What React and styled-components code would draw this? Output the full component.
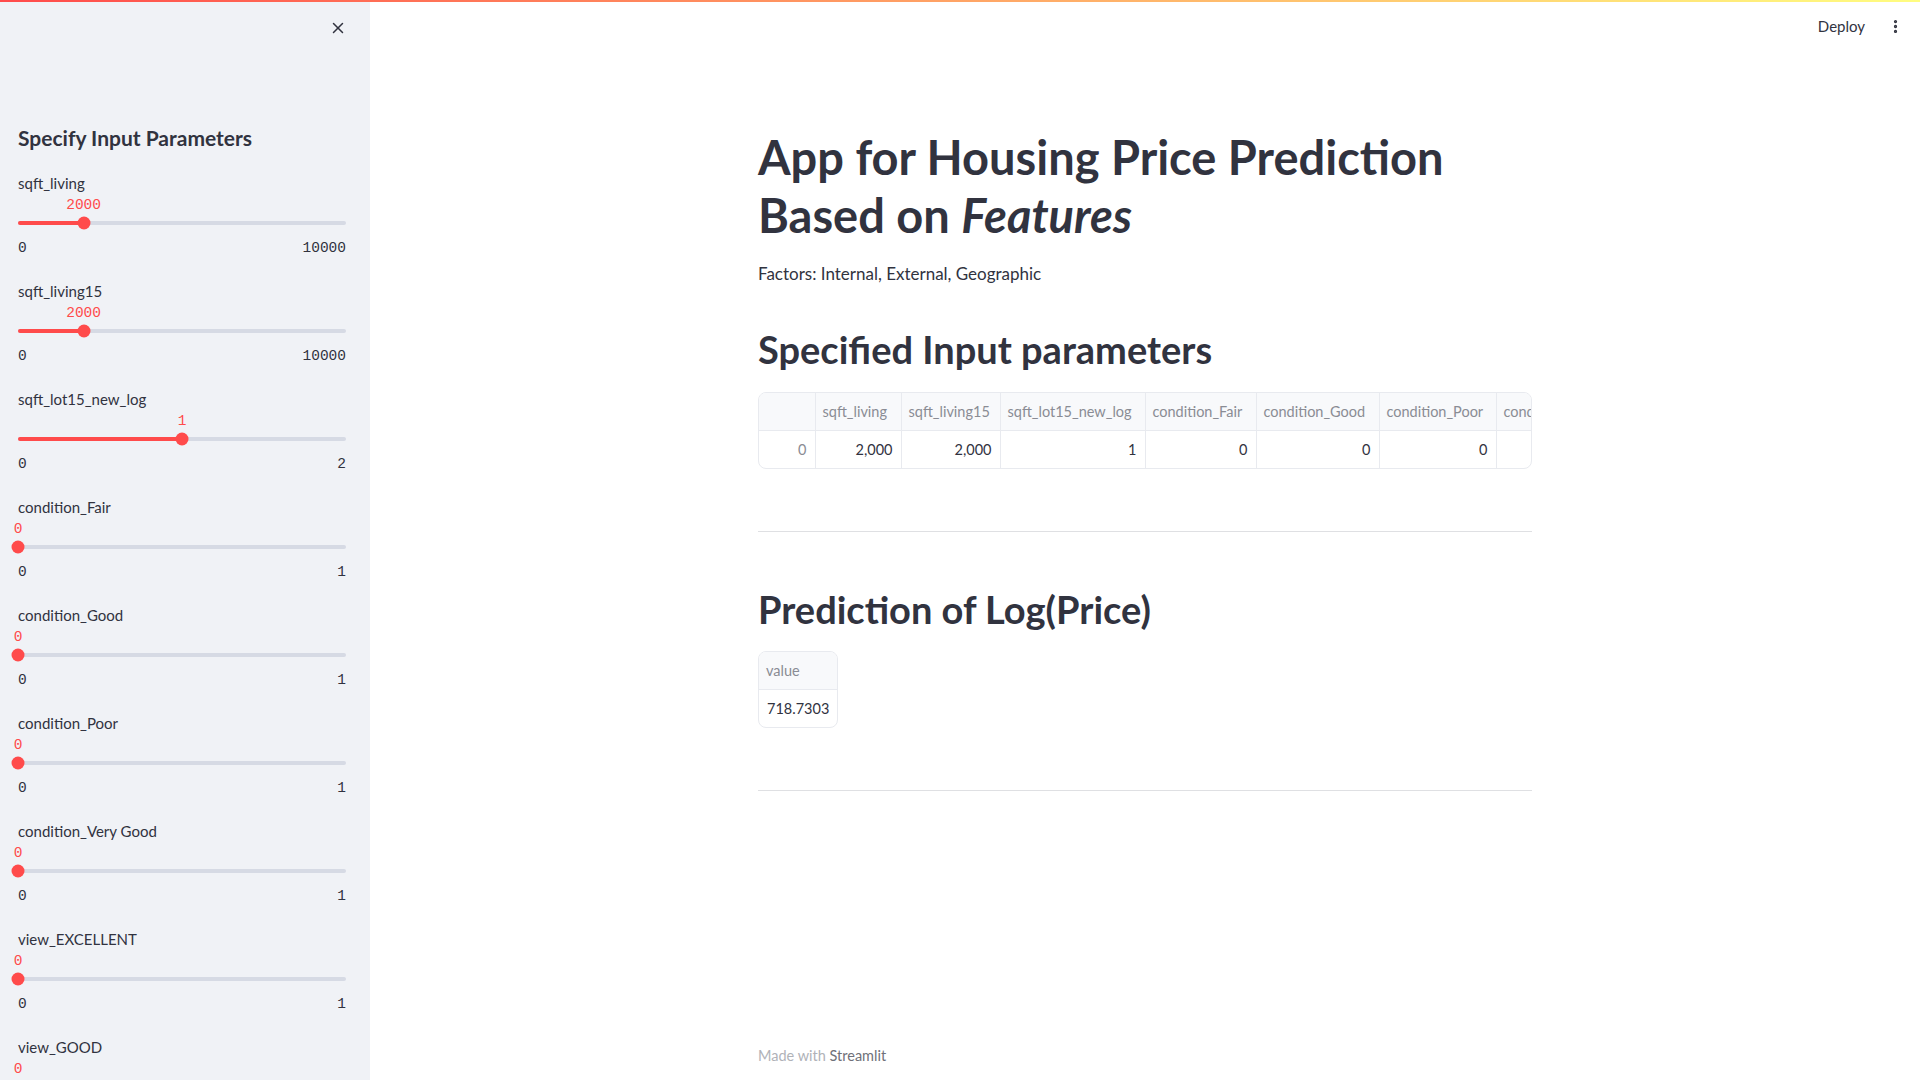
import React from 'react';
import styled, { createGlobalStyle } from 'styled-components';
import { X, EllipsisVertical } from 'lucide-react';

const GlobalStyle = createGlobalStyle`
  html, body {
    margin: 0;
    padding: 0;
    height: 100%;
    overflow: hidden;
  }
  body {
    font-family: Lato, "Noto Sans", sans-serif;
    color: #31333f;
    background: #ffffff;
  }
  * {
    box-sizing: border-box;
  }
`;

const sliders = [
  { label: 'sqft_living', value: 2000, min: 0, max: 10000 },
  { label: 'sqft_living15', value: 2000, min: 0, max: 10000 },
  { label: 'sqft_lot15_new_log', value: 1, min: 0, max: 2 },
  { label: 'condition_Fair', value: 0, min: 0, max: 1 },
  { label: 'condition_Good', value: 0, min: 0, max: 1 },
  { label: 'condition_Poor', value: 0, min: 0, max: 1 },
  { label: 'condition_Very Good', value: 0, min: 0, max: 1 },
  { label: 'view_EXCELLENT', value: 0, min: 0, max: 1 },
  { label: 'view_GOOD', value: 0, min: 0, max: 1 },
];

const columns = [
  { name: 'sqft_living', width: 86, value: '2,000' },
  { name: 'sqft_living15', width: 99, value: '2,000' },
  { name: 'sqft_lot15_new_log', width: 145, value: '1' },
  { name: 'condition_Fair', width: 111, value: '0' },
  { name: 'condition_Good', width: 123, value: '0' },
  { name: 'condition_Poor', width: 117, value: '0' },
  { name: 'condition_Very Good', width: 140, value: '0' },
];

const Slider = ({ label, value, min, max }) => {
  const pct = ((value - min) / (max - min)) * 100;
  return (
    <SliderBlock>
      <SliderLabel>{label}</SliderLabel>
      <ValueRow>
        <ThumbValue style={{ left: `${pct}%` }}>{value}</ThumbValue>
      </ValueRow>
      <TrackWrap>
        <Track>
          <Fill style={{ width: `${pct}%` }} />
        </Track>
        <Thumb style={{ left: `${pct}%` }} />
      </TrackWrap>
      <Ticks>
        <span>{min}</span>
        <span>{max}</span>
      </Ticks>
    </SliderBlock>
  );
};

const App = () => {
  return (
    <>
      <GlobalStyle />
      <Page>
        <Decoration />
        <Body>
          <Sidebar>
            <CloseRow>
              <X size={18} strokeWidth={2} color="#31333f" />
            </CloseRow>
            <SideHeader>Specify Input Parameters</SideHeader>
            <SliderList>
              {sliders.map(s => (
                <Slider key={s.label} {...s} />
              ))}
            </SliderList>
          </Sidebar>
          <Main>
            <TopBar>
              <DeployButton>Deploy</DeployButton>
              <EllipsisVertical size={17} strokeWidth={2.6} color="#31333f" />
            </TopBar>
            <Content>
              <Title>
                App for Housing Price Prediction
                <br />
                Based on <em>Features</em>
              </Title>
              <Paragraph>Factors: Internal, External, Geographic</Paragraph>
              <SubTitle $top={37}>Specified Input parameters</SubTitle>
              <TableFrame $top={19}>
                <Table>
                  <thead>
                    <tr>
                      <HeadCell $width={56} />
                      {columns.map(c => (
                        <HeadCell key={c.name} $width={c.width}>
                          {c.name}
                        </HeadCell>
                      ))}
                    </tr>
                  </thead>
                  <tbody>
                    <tr>
                      <IndexCell>0</IndexCell>
                      {columns.map(c => (
                        <DataCell key={c.name}>{c.value}</DataCell>
                      ))}
                    </tr>
                  </tbody>
                </Table>
              </TableFrame>
              <Divider />
              <SubTitle $top={53}>Prediction of Log(Price)</SubTitle>
              <TableFrame $top={18} $fit>
                <Table>
                  <thead>
                    <tr>
                      <HeadCell $width={78}>value</HeadCell>
                    </tr>
                  </thead>
                  <tbody>
                    <tr>
                      <DataCell $left>718.7303</DataCell>
                    </tr>
                  </tbody>
                </Table>
              </TableFrame>
              <Divider />
              <Footer>
                Made with <FooterLink>Streamlit</FooterLink>
              </Footer>
            </Content>
          </Main>
        </Body>
      </Page>
    </>
  );
};

export default App;

const Page = styled.div`
  display: flex;
  flex-direction: column;
  height: 100vh;
`;

const Decoration = styled.div`
  height: 2px;
  flex-shrink: 0;
  background: linear-gradient(90deg, #ff4b4b, #fffd80);
`;

const Body = styled.div`
  display: flex;
  flex: 1;
  min-height: 0;
`;

const Sidebar = styled.aside`
  width: 370px;
  flex-shrink: 0;
  background: #f0f2f6;
  padding: 0 24px 0 18px;
  overflow: hidden;
`;

const CloseRow = styled.div`
  height: 52px;
  display: flex;
  align-items: center;
  justify-content: flex-end;
  margin-right: -1px;
`;

const SideHeader = styled.h2`
  margin: 69px 0 0;
  font-size: 21px;
  font-weight: 700;
  line-height: 30px;
  color: #31333f;
`;

const SliderList = styled.div`
  display: flex;
  flex-direction: column;
  gap: 18px;
  margin-top: 19px;
`;

const SliderBlock = styled.div`
  display: grid;
  grid-template-rows: 22px 20px 18px 30px;
`;

const SliderLabel = styled.div`
  font-size: 15px;
  line-height: 22px;
  color: #31333f;
`;

const ValueRow = styled.div`
  position: relative;
`;

const ThumbValue = styled.span`
  position: absolute;
  top: 1px;
  transform: translateX(-50%);
  font-family: "Liberation Mono", "DejaVu Sans Mono", monospace;
  font-size: 14.5px;
  line-height: 20px;
  color: #ff4b4b;
  white-space: nowrap;
`;

const TrackWrap = styled.div`
  position: relative;
  display: flex;
  align-items: center;
`;

const Track = styled.div`
  width: 100%;
  height: 4px;
  border-radius: 2px;
  background: #d6dae4;
  overflow: hidden;
`;

const Fill = styled.div`
  height: 100%;
  background: #ff4b4b;
`;

const Thumb = styled.div`
  position: absolute;
  top: 50%;
  width: 13px;
  height: 13px;
  border-radius: 50%;
  background: #ff4b4b;
  transform: translate(-50%, -50%);
`;

const Ticks = styled.div`
  display: flex;
  justify-content: space-between;
  align-items: center;
  padding-top: 2px;
  font-family: "Liberation Mono", "DejaVu Sans Mono", monospace;
  font-size: 14.5px;
  color: #31333f;
`;

const Main = styled.main`
  flex: 1;
  display: flex;
  flex-direction: column;
  overflow: hidden;
`;

const TopBar = styled.header`
  height: 48px;
  flex-shrink: 0;
  display: flex;
  align-items: center;
  justify-content: flex-end;
  gap: 22px;
  padding-right: 16px;
`;

const DeployButton = styled.span`
  font-size: 15px;
  color: #31333f;
`;

const Content = styled.div`
  width: 774px;
  margin: 0 auto;
  display: flex;
  flex-direction: column;
`;

const Title = styled.h1`
  margin: 78px 0 0;
  font-size: 47px;
  font-weight: 700;
  line-height: 58px;
  color: #31333f;

  em {
    font-style: italic;
  }
`;

const Paragraph = styled.p`
  margin: 16px 0 0;
  font-size: 17px;
  line-height: 28px;
  color: #31333f;
`;

const SubTitle = styled.h2`
  margin: ${p => p.$top}px 0 0;
  font-size: 38px;
  font-weight: 700;
  line-height: 48px;
  color: #31333f;
`;

const TableFrame = styled.div`
  margin-top: ${p => p.$top}px;
  align-self: ${p => (p.$fit ? 'flex-start' : 'stretch')};
  border: 1px solid #e8eaef;
  border-radius: 8px;
  overflow: hidden;
`;

const Table = styled.table`
  border-collapse: collapse;
  table-layout: fixed;
  font-size: 14.5px;
  white-space: nowrap;
`;

const HeadCell = styled.th`
  width: ${p => p.$width}px;
  min-width: ${p => p.$width}px;
  max-width: ${p => p.$width}px;
  height: 37px;
  padding: 0 7px;
  background: #f8f9fb;
  border-right: 1px solid #e8eaef;
  border-bottom: 1px solid #e8eaef;
  font-weight: 400;
  color: #8a8c94;
  text-align: left;
  overflow: hidden;

  &:last-child {
    border-right: none;
  }
`;

const DataCell = styled.td`
  height: 38px;
  padding: 0 8px;
  border-right: 1px solid #e8eaef;
  color: #31333f;
  text-align: ${p => (p.$left ? 'left' : 'right')};
  overflow: hidden;

  &:last-child {
    border-right: none;
  }
`;

const IndexCell = styled(DataCell)`
  color: #8a8c94;
`;

const Divider = styled.hr`
  margin: 62px 0 0;
  border: none;
  height: 1px;
  background: #dfe0e3;
`;

const Footer = styled.div`
  margin-top: 255px;
  font-size: 14.5px;
  line-height: 20px;
  color: #b0b2b8;
`;

const FooterLink = styled.span`
  color: #6f7179;
`;
